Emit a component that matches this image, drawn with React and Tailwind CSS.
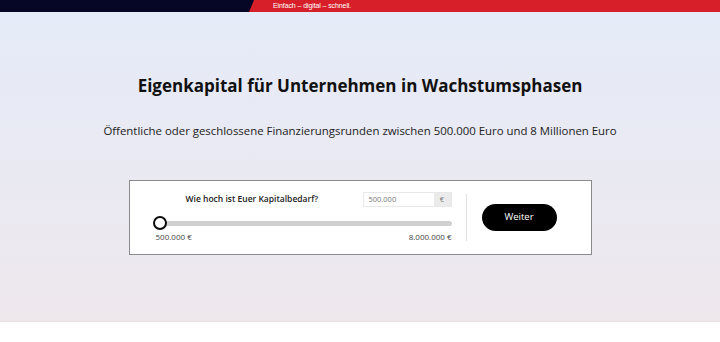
export default function App() {
  return (
    <div className="w-[720px] h-[342px] overflow-hidden bg-white" style={{ fontFamily: "'Open Sans', sans-serif" }}>
      {/* top strip */}
      <div className="relative h-[12px] bg-[#d61f28] flex">
        <svg className="absolute left-0 top-0" width="256" height="12" viewBox="0 0 256 12">
          <polygon points="0,0 254,0 249,12 0,12" fill="#060626" />
        </svg>
        <span className="relative ml-[273px] text-[7px] leading-[12px] text-white" style={{ fontFamily: "'Liberation Sans Narrow', 'Liberation Sans', sans-serif", letterSpacing: "-0.1px" }}>
          Einfach – digital – schnell.
        </span>
      </div>

      {/* hero */}
      <div className="h-[310px] bg-gradient-to-b from-[#e5ebf8] to-[#eee8ed] border-b border-[#e4e2e4] flex flex-col items-center">
        <h1 className="mt-[62px] text-[17px] leading-[24px] font-bold text-[#111]">
          Eigenkapital für Unternehmen in Wachstumsphasen
        </h1>
        <p className="mt-[24px] text-[11.4px] leading-[18px] text-[#222]">
          Öffentliche oder geschlossene Finanzierungsrunden zwischen 500.000 Euro und 8 Millionen Euro
        </p>

        <div className="mt-[40px] w-[463px] h-[75px] bg-white border border-[#8a8a8a] flex items-center">
          <div className="ml-[26px] w-[296px] flex flex-col">
            <div className="flex items-center justify-between pl-[30px]">
              <span className="text-[8.5px] font-semibold text-[#222]">Wie hoch ist Euer Kapitalbedarf?</span>
              <div className="flex h-[15px] border border-[#e8e8e8] text-[7.5px] text-[#777]">
                <span className="w-[70px] pl-[5px] leading-[13px]">500.000</span>
                <span className="w-[17px] bg-[#ebebeb] text-center leading-[13px]">€</span>
              </div>
            </div>
            <div className="relative mt-[11px] h-[10px] flex items-center">
              <div className="w-full h-[5px] rounded-full bg-[#d0d0d0]" />
              <div className="absolute left-[-3px] top-[-2px] w-[14px] h-[14px] rounded-full border-2 border-[#0b0b0b] bg-white" />
            </div>
            <div className="mt-[3px] flex justify-between text-[8px] leading-[12px] text-[#444]">
              <span>500.000 €</span>
              <span>8.000.000 €</span>
            </div>
          </div>
          <div className="ml-[14px] w-px h-[47px] bg-[#e2e2e2]" />
          <button className="ml-[15px] w-[75px] h-[27px] rounded-full bg-black text-white text-[9.5px]">
            Weiter
          </button>
        </div>
      </div>
    </div>
  );
}
